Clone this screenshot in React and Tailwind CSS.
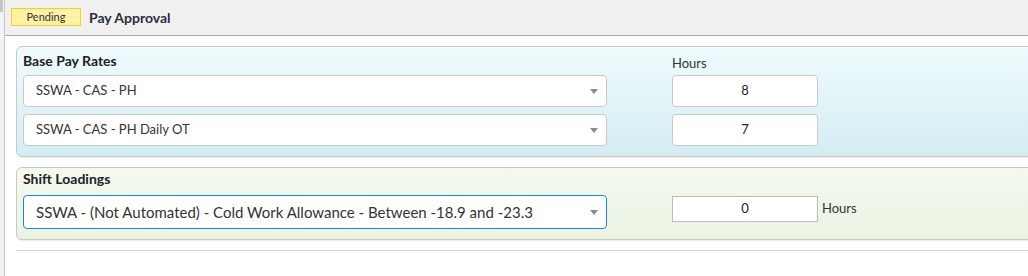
import React from "react";

const Caret = () => (
  <svg width="8" height="5" viewBox="0 0 8 5" className="shrink-0">
    <path d="M0 0h8L4 5z" fill="#8a8a8a" />
  </svg>
);

const SelectBox = ({ label, focused, height = "h-[32px]", textSize = "text-[13px]" }) => (
  <div
    className={`flex items-center justify-between ${height} w-[584px] bg-white rounded-[4px] pl-[12px] pr-[8px] ${textSize} text-[#333] ${
      focused ? "border border-[#1a86d9]" : "border border-[#c9c9c9]"
    }`}
  >
    <span>{label}</span>
    <Caret />
  </div>
);

const HoursInput = ({ value, square }) => (
  <div
    className={`flex items-center justify-center w-[146px] bg-white text-[13px] text-[#222] ${
      square
        ? "h-[26px] border border-[#bdbdbd]"
        : "h-[32px] rounded-[4px] border border-[#c9c9c9]"
    }`}
  >
    {value}
  </div>
);

export default function App() {
  const baseRates = [
    { name: "SSWA - CAS - PH", hours: 8 },
    { name: "SSWA - CAS - PH Daily OT", hours: 7 },
  ];

  return (
    <div
      className="flex w-[1028px] h-[276px] overflow-hidden bg-white"
      style={{ fontFamily: "Lato, 'Open Sans', sans-serif" }}
    >
      {/* left gutter */}
      <div className="w-[4px] shrink-0 flex flex-col bg-[#f3f3f3]">
        <div className="h-[12px] w-[3px] bg-[#c4c4c4]" />
      </div>

      <div className="w-[1060px] shrink-0 border-l border-[#c6c6c6]">
        {/* header */}
        <div className="flex items-center gap-[8px] h-[36px] bg-[#f0f0f0] border-b border-[#a9a9a9] pl-[6px] pb-[1px]">
          <span className="flex items-center justify-center w-[70px] h-[18px] bg-[#fff1a6] border border-[#f2d31b] text-[11px] text-[#333]">
            Pending
          </span>
          <span className="text-[14px] font-bold text-[#2a2f3b]">
            Pay Approval
          </span>
        </div>

        <div className="pl-[11px] pt-[10px]">
          {/* base pay rates */}
          <div className="rounded-[6px] border border-[#c8c8c8] bg-gradient-to-b from-[#effbfd] to-[#d3edf3] pl-[6px] pt-[5px] pb-[10px] shadow-[0_1px_1px_rgba(0,0,0,0.08)]">
            <div className="flex gap-[65px]">
              <div className="flex flex-col">
                <div className="h-[23px] text-[14px] leading-[18px] font-bold text-[#222]">
                  Base Pay Rates
                </div>
                <div className="flex flex-col gap-[7px]">
                  {baseRates.map((r) => (
                    <SelectBox key={r.name} label={r.name} />
                  ))}
                </div>
              </div>
              <div className="flex flex-col">
                <div className="h-[23px] pt-[2px] text-[13px] text-[#333]">
                  Hours
                </div>
                <div className="flex flex-col gap-[7px]">
                  {baseRates.map((r) => (
                    <HoursInput key={r.name} value={r.hours} />
                  ))}
                </div>
              </div>
            </div>
          </div>

          {/* shift loadings */}
          <div className="mt-[10px] rounded-[6px] border border-[#c8c8c8] bg-gradient-to-b from-[#f4f9ef] to-[#eaf3e2] pl-[6px] pt-[2px] pb-[10px] shadow-[0_1px_1px_rgba(0,0,0,0.08)]">
            <div className="h-[25px] text-[14px] leading-[18px] font-bold text-[#222]">
              Shift Loadings
            </div>
            <div className="flex items-start gap-[65px]">
              <SelectBox
                label="SSWA - (Not Automated) - Cold Work Allowance - Between -18.9 and -23.3"
                focused
                height="h-[34px]"
                textSize="text-[15px]"
              />
              <div className="flex items-center gap-[4px] mt-[1px]">
                <HoursInput value={0} square />
                <span className="text-[13px] text-[#333]">Hours</span>
              </div>
            </div>
          </div>

          <div className="mt-[10px] border-t border-[#cfcfcf]" />
        </div>
      </div>
    </div>
  );
}
